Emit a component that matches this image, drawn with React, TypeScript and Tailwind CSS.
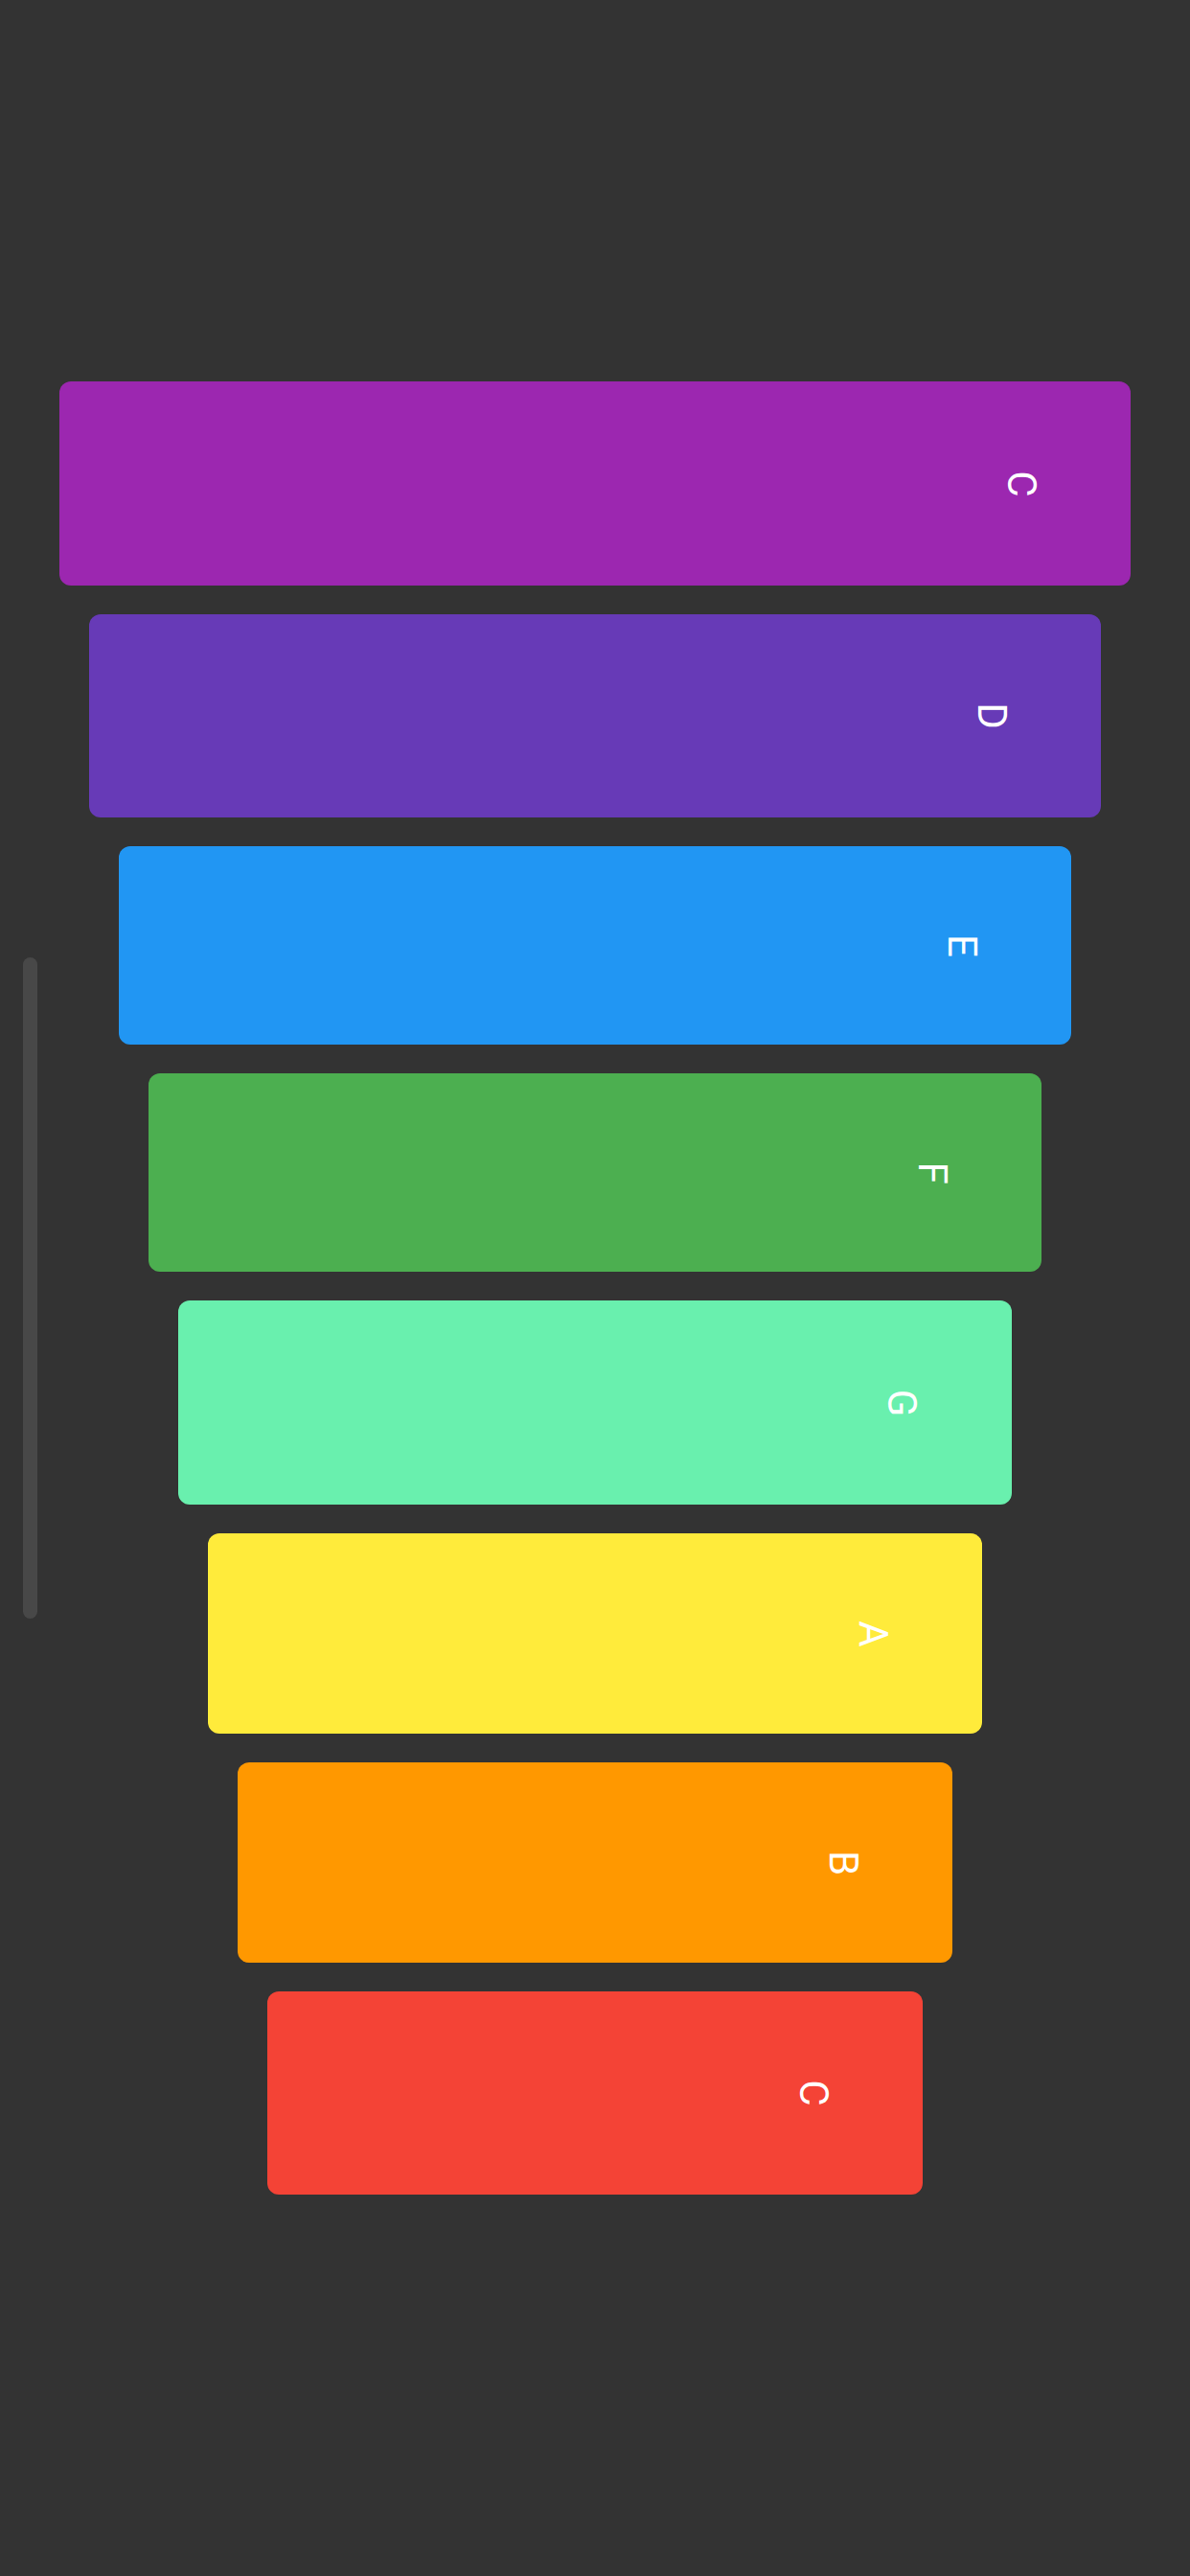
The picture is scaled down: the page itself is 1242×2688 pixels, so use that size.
const bars = [
  { note: "C", color: "bg-[#9c27b0]", width: "w-[90%]", height: "h-[213px]" },
  { note: "D", color: "bg-[#673ab7]", width: "w-[85%]", height: "h-[212px]" },
  { note: "E", color: "bg-[#2196f3]", width: "w-[80%]", height: "h-[207px]" },
  { note: "F", color: "bg-[#4caf50]", width: "w-[75%]", height: "h-[207px]" },
  { note: "G", color: "bg-[#69f0ae]", width: "w-[70%]", height: "h-[213px]" },
  { note: "A", color: "bg-[#ffeb3b]", width: "w-[65%]", height: "h-[209px]" },
  { note: "B", color: "bg-[#ff9800]", width: "w-[60%]", height: "h-[209px]" },
  { note: "C", color: "bg-[#f44336]", width: "w-[55%]", height: "h-[212px]" },
];

const Bar = ({ note, color, width, height }: (typeof bars)[number]) => (
  <div className={`${color} ${width} ${height} flex items-center justify-end rounded-xl`}>
    <div className="mr-[84px] flex h-[60px] w-[60px] items-center justify-center">
      <span className="rotate-90 text-[42px] leading-none text-white">{note}</span>
    </div>
  </div>
);

const App = () => {
  return (
    <div
      style={{ fontFamily: "Roboto, 'Noto Sans', sans-serif" }}
      className="relative flex min-h-screen flex-col items-center justify-center gap-[30px] bg-[#333333]"
    >
      {bars.map((bar, i) => (
        <Bar key={i} {...bar} />
      ))}
      <div className="absolute left-[24px] top-1/2 h-[690px] w-[15px] -translate-y-1/2 rounded-full bg-[#484848]" />
    </div>
  );
};

export default App;
